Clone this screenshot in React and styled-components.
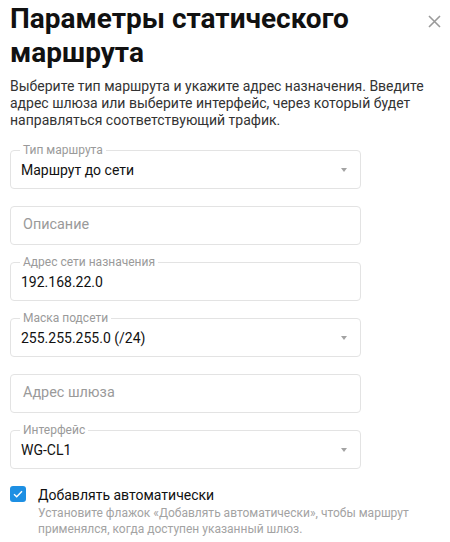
import React from 'react'
import styled, { createGlobalStyle } from 'styled-components'

const GlobalStyle = createGlobalStyle`
  body {
    margin: 0;
    background: #fff;
    font-family: Roboto, "Noto Sans", sans-serif;
    color: #1a1a1a;
  }
`

const Dialog = styled.div`
  width: 450px;
  padding: 2px 10px 0 10px;
  box-sizing: border-box;
`

const Header = styled.div`
  display: flex;
  justify-content: space-between;
  align-items: flex-start;
`

const Title = styled.h1`
  margin: 0;
  font-size: 28px;
  line-height: 34px;
  font-weight: 700;
  color: #111;
  letter-spacing: 0;
`

const CloseButton = styled.button`
  border: none;
  background: none;
  padding: 0;
  margin: 10px -2px 0 0;
  width: 18px;
  height: 18px;
  display: flex;
  align-items: center;
  justify-content: center;
  cursor: pointer;
`

const Description = styled.p`
  margin: 8px 0 21px 0;
  font-size: 14px;
  line-height: 17px;
  color: #333;
`

const Form = styled.div`
  width: 351px;
  display: flex;
  flex-direction: column;
  gap: 17px;
`

const FieldBox = styled.div`
  position: relative;
  height: 39px;
  display: flex;
  align-items: center;
  padding: 0 11px;
  box-sizing: border-box;
`

const Outline = styled.fieldset`
  position: absolute;
  inset: ${p => (p.$notched ? '-6px 0 0 0' : '0')};
  margin: 0;
  padding: 0 9px;
  border: 1px solid #e3e3e3;
  border-radius: 4px;
  pointer-events: none;
`

const Legend = styled.legend`
  padding: 0 3px;
  font-size: 12px;
  line-height: 12px;
  color: #9a9a9a;
  white-space: nowrap;
`

const Value = styled.span`
  flex: 1;
  font-size: ${p => (p.$placeholder ? '14.4px' : '14px')};
  color: ${p => (p.$placeholder ? '#9a9a9a' : '#111')};
  padding-left: ${p => (p.$placeholder ? '2px' : '0')};
  padding-top: ${p => (p.$placeholder ? '0' : '1px')};
  padding-bottom: ${p => (p.$placeholder ? '2px' : '0')};
`

const Arrow = styled.span`
  width: 0;
  height: 0;
  border-left: 3px solid transparent;
  border-right: 3px solid transparent;
  border-top: 4px solid #a3a3a3;
  margin-right: 3px;
`

const CheckRow = styled.label`
  display: grid;
  grid-template-columns: 16px 1fr;
  column-gap: 12px;
  margin-top: 17px;
`

const Check = styled.span`
  width: 16px;
  height: 16px;
  border-radius: 3px;
  background: #1d8fe3;
  display: flex;
  align-items: center;
  justify-content: center;
  margin-top: 0;
`

const CheckLabel = styled.span`
  font-size: 14px;
  line-height: 18px;
  color: #111;
`

const Helper = styled.span`
  grid-column: 2;
  font-size: 12px;
  line-height: 16px;
  color: #a3a3a3;
  margin-top: 1px;
`

function Field({ label, value, placeholder, select }) {
  return (
    <FieldBox>
      <Outline $notched={!!label}>{label && <Legend>{label}</Legend>}</Outline>
      <Value $placeholder={!value}>{value || placeholder}</Value>
      {select && <Arrow />}
    </FieldBox>
  )
}

export default function App() {
  return (
    <>
      <GlobalStyle />
      <Dialog>
        <Header>
          <Title>Параметры статического маршрута</Title>
          <CloseButton aria-label="Закрыть">
            <svg width="13" height="13" viewBox="0 0 13 13">
              <path d="M1 1L12 12M12 1L1 12" stroke="#9a9a9a" strokeWidth="1.6" />
            </svg>
          </CloseButton>
        </Header>
        <Description>
          Выберите тип маршрута и укажите адрес назначения. Введите адрес шлюза или выберите
          интерфейс, через который будет направляться соответствующий трафик.
        </Description>
        <Form>
          <Field label="Тип маршрута" value="Маршрут до сети" select />
          <Field placeholder="Описание" />
          <Field label="Адрес сети назначения" value="192.168.22.0" />
          <Field label="Маска подсети" value="255.255.255.0 (/24)" select />
          <Field placeholder="Адрес шлюза" />
          <Field label="Интерфейс" value="WG-CL1" select />
        </Form>
        <CheckRow>
          <Check>
            <svg width="10" height="8" viewBox="0 0 10 8">
              <path d="M1 4.2L3.7 6.8L9 1.2" fill="none" stroke="#fff" strokeWidth="1.4" />
            </svg>
          </Check>
          <CheckLabel>Добавлять автоматически</CheckLabel>
          <Helper>
            Установите флажок «Добавлять автоматически», чтобы маршрут применялся, когда
            доступен указанный шлюз.
          </Helper>
        </CheckRow>
      </Dialog>
    </>
  )
}
